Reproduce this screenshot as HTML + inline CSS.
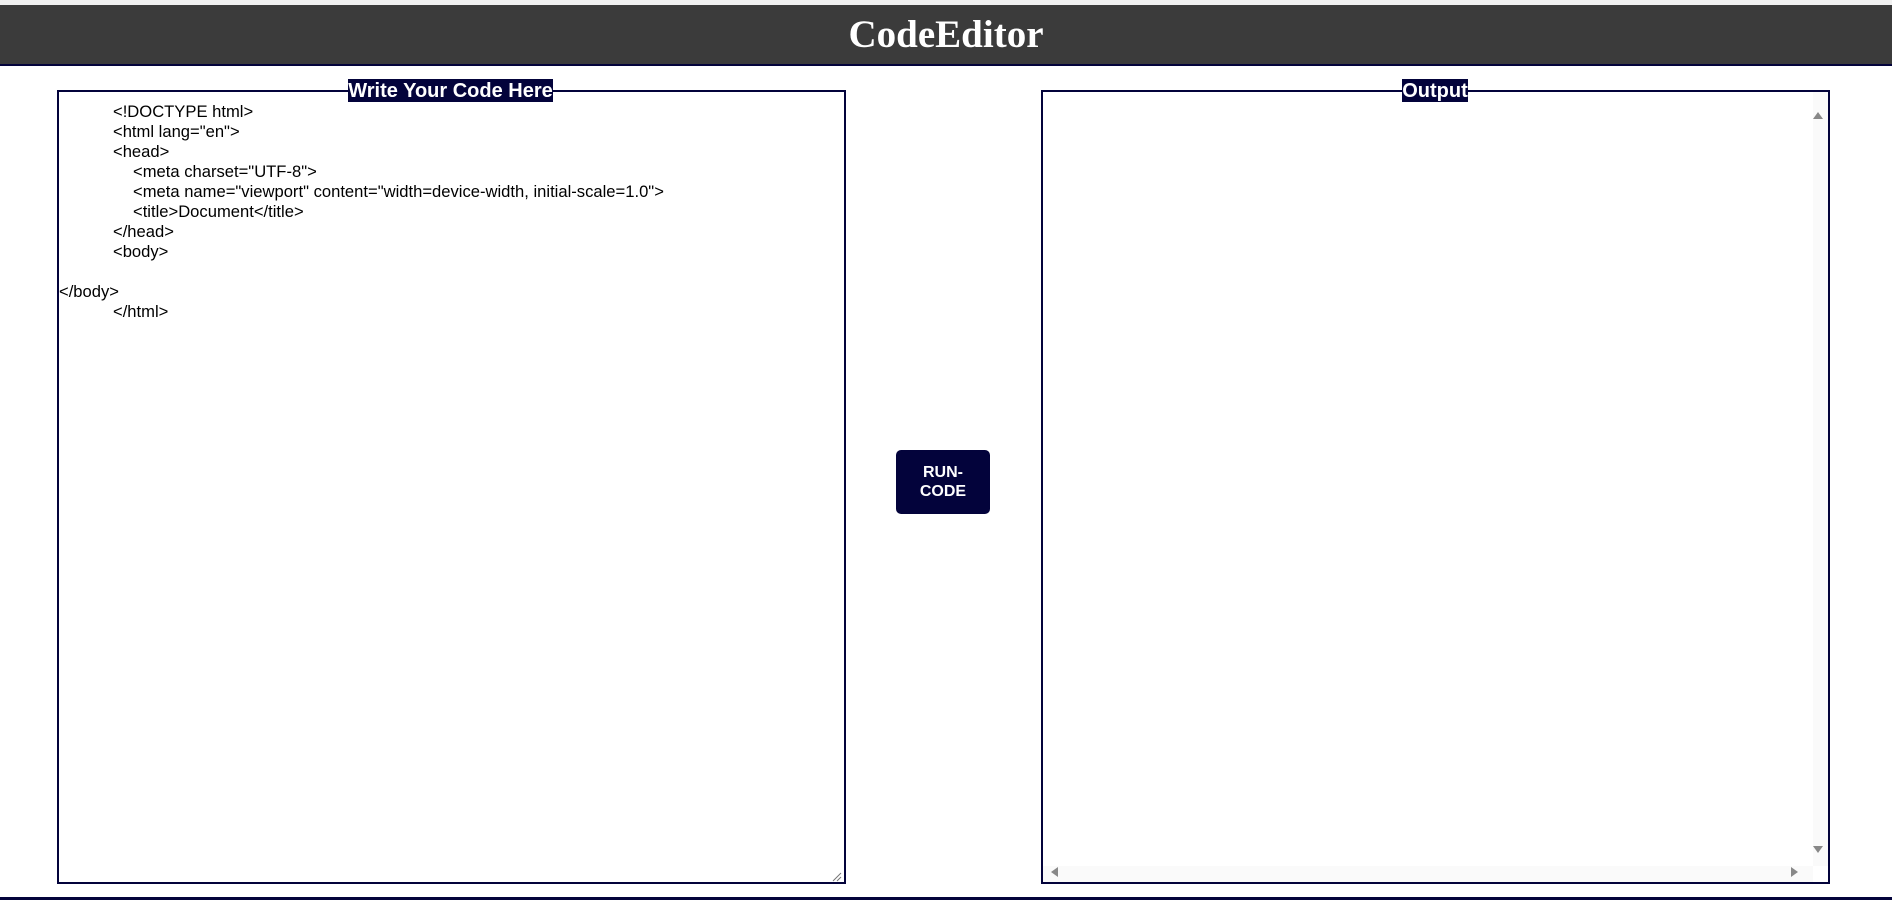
<!DOCTYPE html>
<html><head><style>
*{margin:0;padding:0;box-sizing:border-box}
html,body{width:1892px;height:903px;overflow:hidden;background:#fff;font-family:"Liberation Sans",Arial,sans-serif}
.top{position:absolute;left:0;top:0;width:1892px;height:5px;background:#f0f0f0}
.hdr{position:absolute;left:0;top:5px;width:1892px;height:61px;background:#3b3b3b;border-bottom:2px solid #03033b;text-align:center}
.hdr h1{font-family:"Liberation Serif",serif;font-weight:bold;font-size:39px;color:#fff;line-height:60px}
.box{position:absolute;top:90px;height:794px;border:2px solid #03033b;background:#fff}
.lg{position:absolute;top:79px;height:23px;background:#03033b;color:#fff;font-weight:bold;font-size:20px;line-height:24px;text-align:center}
.code{position:absolute;left:59px;top:102px;font-size:16.6px;line-height:20px;color:#000;white-space:pre}
.btn{position:absolute;left:896px;top:450px;width:94px;height:64px;background:#03033b;border-radius:5px;color:#fff;font-weight:bold;font-size:16px;line-height:19px;text-align:center;padding-top:13px}
.bot{position:absolute;left:0;top:897px;width:1892px;height:3px;background:#03033b}
.vs{position:absolute;left:1813px;top:92px;width:15px;height:774px;background:#fafafa}
.hs{position:absolute;left:1043px;top:866px;width:770px;height:16px;background:#fafafa}
.tri{position:absolute;width:0;height:0}
</style></head><body>
<div class="top"></div>
<div class="hdr"><h1>CodeEditor</h1></div>
<div class="box" style="left:57px;width:789px"></div>
<div class="lg" style="left:348px;width:205px">Write Your Code Here</div>
<div class="code"><div style="padding-left:54px">&lt;!DOCTYPE html&gt;</div><div style="padding-left:54px">&lt;html lang="en"&gt;</div><div style="padding-left:54px">&lt;head&gt;</div><div style="padding-left:74px">&lt;meta charset="UTF-8"&gt;</div><div style="padding-left:74px">&lt;meta name="viewport" content="width=device-width, initial-scale=1.0"&gt;</div><div style="padding-left:74px">&lt;title&gt;Document&lt;/title&gt;</div><div style="padding-left:54px">&lt;/head&gt;</div><div style="padding-left:54px">&lt;body&gt;</div><div>&nbsp;</div><div>&lt;/body&gt;</div><div style="padding-left:54px">&lt;/html&gt;</div></div>
<svg style="position:absolute;left:832px;top:872px" width="10" height="10"><path d="M1 9L9 1M5 9L9 5" stroke="#777" stroke-width="1"/></svg>
<div class="box" style="left:1041px;width:789px"></div>
<div class="vs"></div><div class="hs"></div>
<div class="tri" style="left:1813px;top:112px;border-left:5px solid transparent;border-right:5px solid transparent;border-bottom:7px solid #888"></div>
<div class="tri" style="left:1813px;top:846px;border-left:5px solid transparent;border-right:5px solid transparent;border-top:7px solid #888"></div>
<div class="tri" style="left:1051px;top:867px;border-top:5px solid transparent;border-bottom:5px solid transparent;border-right:7px solid #888"></div>
<div class="tri" style="left:1791px;top:867px;border-top:5px solid transparent;border-bottom:5px solid transparent;border-left:7px solid #888"></div>
<div class="lg" style="left:1402px;width:66px">Output</div>
<div class="btn">RUN-<br>CODE</div>
<div class="bot"></div>
</body></html>
